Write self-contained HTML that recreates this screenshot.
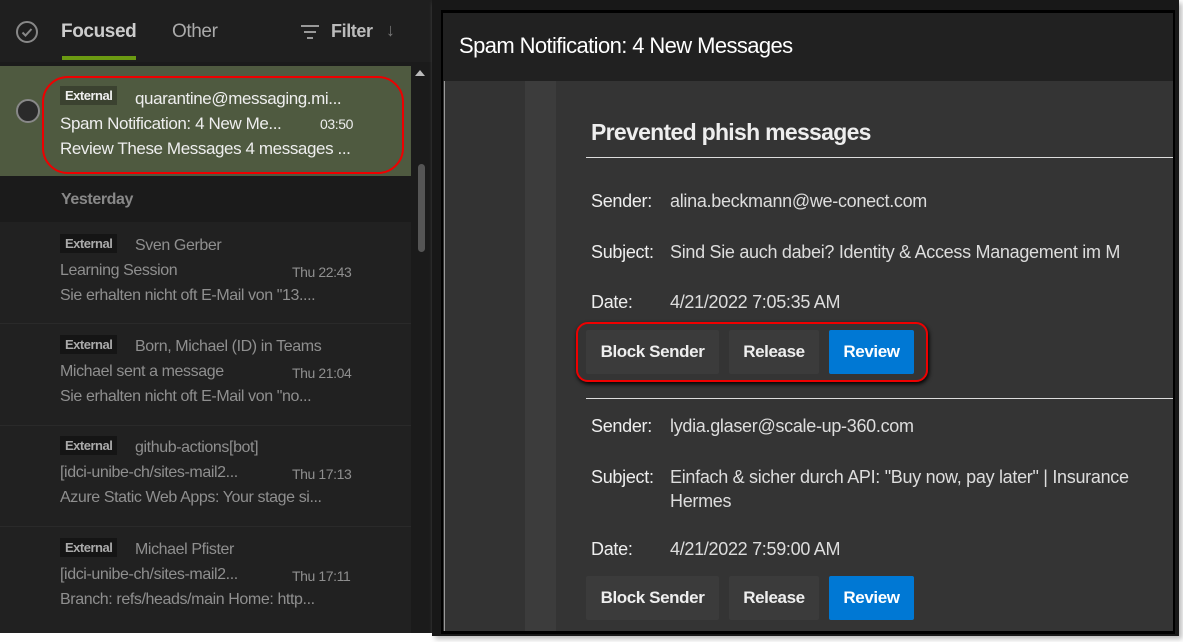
<!DOCTYPE html>
<html><head><style>
*{margin:0;padding:0;box-sizing:border-box}
body{width:1183px;height:642px;background:#fff;position:relative;overflow:hidden;font-family:"Liberation Sans",sans-serif}
.a{position:absolute}
.left{left:0;top:0;width:443px;height:633px;background:#1b1b1b}
.row{position:absolute;left:0;width:411px;background:#212121;border-bottom:1px solid #2a2a2a}
.t{position:absolute;white-space:nowrap;color:#8f8f8f;font-size:16px;letter-spacing:-0.4px}
.ext{position:absolute;background:#151515;color:#aaa;font-size:13px;font-weight:bold;padding:2px 5px;letter-spacing:-0.5px}
.r{color:#ddd;font-size:18px;white-space:nowrap;position:absolute;letter-spacing:-0.3px}
.lab{color:#eee}
.btn{position:absolute;height:44px;background:#3b3b3b;color:#eee;font-size:17px;font-weight:bold;display:flex;align-items:center;justify-content:center;border-radius:2px;letter-spacing:-0.4px}
.blue{background:#0078d4;color:#fff}
</style></head><body>
<div class="a left"></div>
<div class="a" style="left:0;top:0;width:432px;height:62px;background:#1f1f1f"></div>
<svg class="a" style="left:15px;top:20px" width="24" height="24"><circle cx="12" cy="12" r="10" fill="none" stroke="#888" stroke-width="2"/><path d="M7.5 12.5l3 3 6-6.5" fill="none" stroke="#888" stroke-width="2"/></svg>
<div class="t" style="left:61px;top:21px;color:#ccc;font-size:19px;font-weight:bold">Focused</div>
<div class="a" style="left:62px;top:56px;width:74px;height:4px;background:#6b9a12"></div>
<div class="t" style="left:172px;top:21px;color:#aaa;font-size:19px">Other</div>
<svg class="a" style="left:300px;top:24px" width="20" height="16"><path d="M1 2h18M4 8h12M7 14h6" stroke="#999" stroke-width="2"/></svg>
<div class="t" style="left:331px;top:21px;color:#bbb;font-size:18px;font-weight:bold">Filter</div>
<div class="t" style="left:386px;top:20px;color:#777;font-size:18px">↓</div>
<div class="a" style="left:411px;top:62px;width:21px;height:571px;background:#1b1b1b"></div>
<div class="a" style="left:415px;top:70px;width:0;height:0;border-left:5px solid transparent;border-right:5px solid transparent;border-bottom:6px solid #bbb"></div>
<div class="a" style="left:418px;top:164px;width:7px;height:88px;background:#555;border-radius:4px"></div>

<div class="row" style="top:66px;height:110px;background:#4f5a40;border:none"></div>
<div class="a" style="left:42px;top:76px;width:362px;height:98px;border:2px solid #e00;border-radius:26px"></div>
<div class="a" style="left:16px;top:99px;width:24px;height:24px;border-radius:50%;background:#2a2a2a;border:2px solid #888"></div>
<div class="ext" style="left:60px;top:86px;background:#3b4230;color:#eee">External</div>
<div class="t" style="left:135px;top:89px;color:#eee;font-size:17px">quarantine@messaging.mi...</div>
<div class="t" style="left:60px;top:114px;color:#eee;font-size:17px">Spam Notification: 4 New Me...</div>
<div class="t" style="left:320px;top:116px;color:#eee;font-size:14px">03:50</div>
<div class="t" style="left:60px;top:139px;color:#eee;font-size:17px">Review These Messages 4 messages ...</div>
<div class="t" style="left:61px;top:191px;color:#888;font-size:16px;font-weight:bold">Yesterday</div>

<div class="row" style="top:222px;height:102px"></div>
<div class="ext" style="left:60px;top:234px">External</div>
<div class="t" style="left:135px;top:237px">Sven Gerber</div>
<div class="t" style="left:60px;top:262px">Learning Session</div>
<div class="t" style="left:292px;top:264px;font-size:14px">Thu 22:43</div>
<div class="t" style="left:60px;top:287px">Sie erhalten nicht oft E-Mail von "13....</div>

<div class="row" style="top:324px;height:102px"></div>
<div class="ext" style="left:60px;top:335px">External</div>
<div class="t" style="left:135px;top:338px">Born, Michael (ID) in Teams</div>
<div class="t" style="left:60px;top:363px">Michael sent a message</div>
<div class="t" style="left:292px;top:365px;font-size:14px">Thu 21:04</div>
<div class="t" style="left:60px;top:388px">Sie erhalten nicht oft E-Mail von "no...</div>

<div class="row" style="top:426px;height:101px"></div>
<div class="ext" style="left:60px;top:436px">External</div>
<div class="t" style="left:135px;top:439px">github-actions[bot]</div>
<div class="t" style="left:60px;top:464px">[idci-unibe-ch/sites-mail2...</div>
<div class="t" style="left:292px;top:466px;font-size:14px">Thu 17:13</div>
<div class="t" style="left:60px;top:489px">Azure Static Web Apps: Your stage si...</div>

<div class="row" style="top:527px;height:106px;border:none"></div>
<div class="ext" style="left:60px;top:538px">External</div>
<div class="t" style="left:135px;top:541px">Michael Pfister</div>
<div class="t" style="left:60px;top:566px">[idci-unibe-ch/sites-mail2...</div>
<div class="t" style="left:292px;top:568px;font-size:14px">Thu 17:11</div>
<div class="t" style="left:60px;top:591px">Branch: refs/heads/main Home: http...</div>

<!-- right -->
<div class="a" style="left:432px;top:0;width:747px;height:636px;background:#181818;box-shadow:3px 3px 5px #bbb"></div>
<div class="a" style="left:441px;top:10px;width:734px;height:624px;background:#000"></div>
<div class="a" style="left:443px;top:13px;width:730px;height:68px;background:#212121"></div>
<div class="r" style="left:459px;top:33px;font-size:22px;color:#fff;letter-spacing:-0.6px">Spam Notification: 4 New Messages</div>
<div class="a" style="left:443px;top:81px;width:730px;height:550px;background:#333"></div>
<div class="a" style="left:444px;top:81px;width:1px;height:550px;background:#999"></div>
<div class="a" style="left:525px;top:81px;width:31px;height:550px;background:#3c3c3c"></div>
<div class="a" style="left:556px;top:81px;width:617px;height:550px;background:#343434"></div>
<div class="r" style="left:591px;top:119px;font-size:23px;font-weight:bold;color:#eee;letter-spacing:-0.7px">Prevented phish messages</div>
<div class="a" style="left:586px;top:157px;width:587px;height:1px;background:#ddd"></div>
<div class="r lab" style="left:591px;top:191px">Sender:</div><div class="r" style="left:670px;top:191px">alina.beckmann@we-conect.com</div>
<div class="r lab" style="left:591px;top:242px">Subject:</div><div class="r" style="left:670px;top:242px;width:503px;overflow:hidden">Sind Sie auch dabei? Identity &amp; Access Management im M</div>
<div class="r lab" style="left:591px;top:292px">Date:</div><div class="r" style="left:670px;top:292px">4/21/2022 7:05:35 AM</div>
<div class="btn" style="left:586px;top:330px;width:133px">Block Sender</div>
<div class="btn" style="left:729px;top:330px;width:90px">Release</div>
<div class="btn blue" style="left:829px;top:330px;width:85px">Review</div>
<div class="a" style="left:576px;top:322px;width:352px;height:60px;border:2px solid #e00;border-radius:12px;box-shadow:1px 2px 4px #000"></div>
<div class="a" style="left:586px;top:398px;width:587px;height:1px;background:#ddd"></div>
<div class="r lab" style="left:591px;top:416px">Sender:</div><div class="r" style="left:670px;top:416px">lydia.glaser@scale-up-360.com</div>
<div class="r lab" style="left:591px;top:467px">Subject:</div><div class="r" style="left:670px;top:467px;width:503px;overflow:hidden">Einfach &amp; sicher durch API: "Buy now, pay later" | Insurance</div>
<div class="r" style="left:670px;top:491px">Hermes</div>
<div class="r lab" style="left:591px;top:539px">Date:</div><div class="r" style="left:670px;top:539px">4/21/2022 7:59:00 AM</div>
<div class="btn" style="left:586px;top:576px;width:133px">Block Sender</div>
<div class="btn" style="left:729px;top:576px;width:90px">Release</div>
<div class="btn blue" style="left:829px;top:576px;width:85px">Review</div>
</body></html>
